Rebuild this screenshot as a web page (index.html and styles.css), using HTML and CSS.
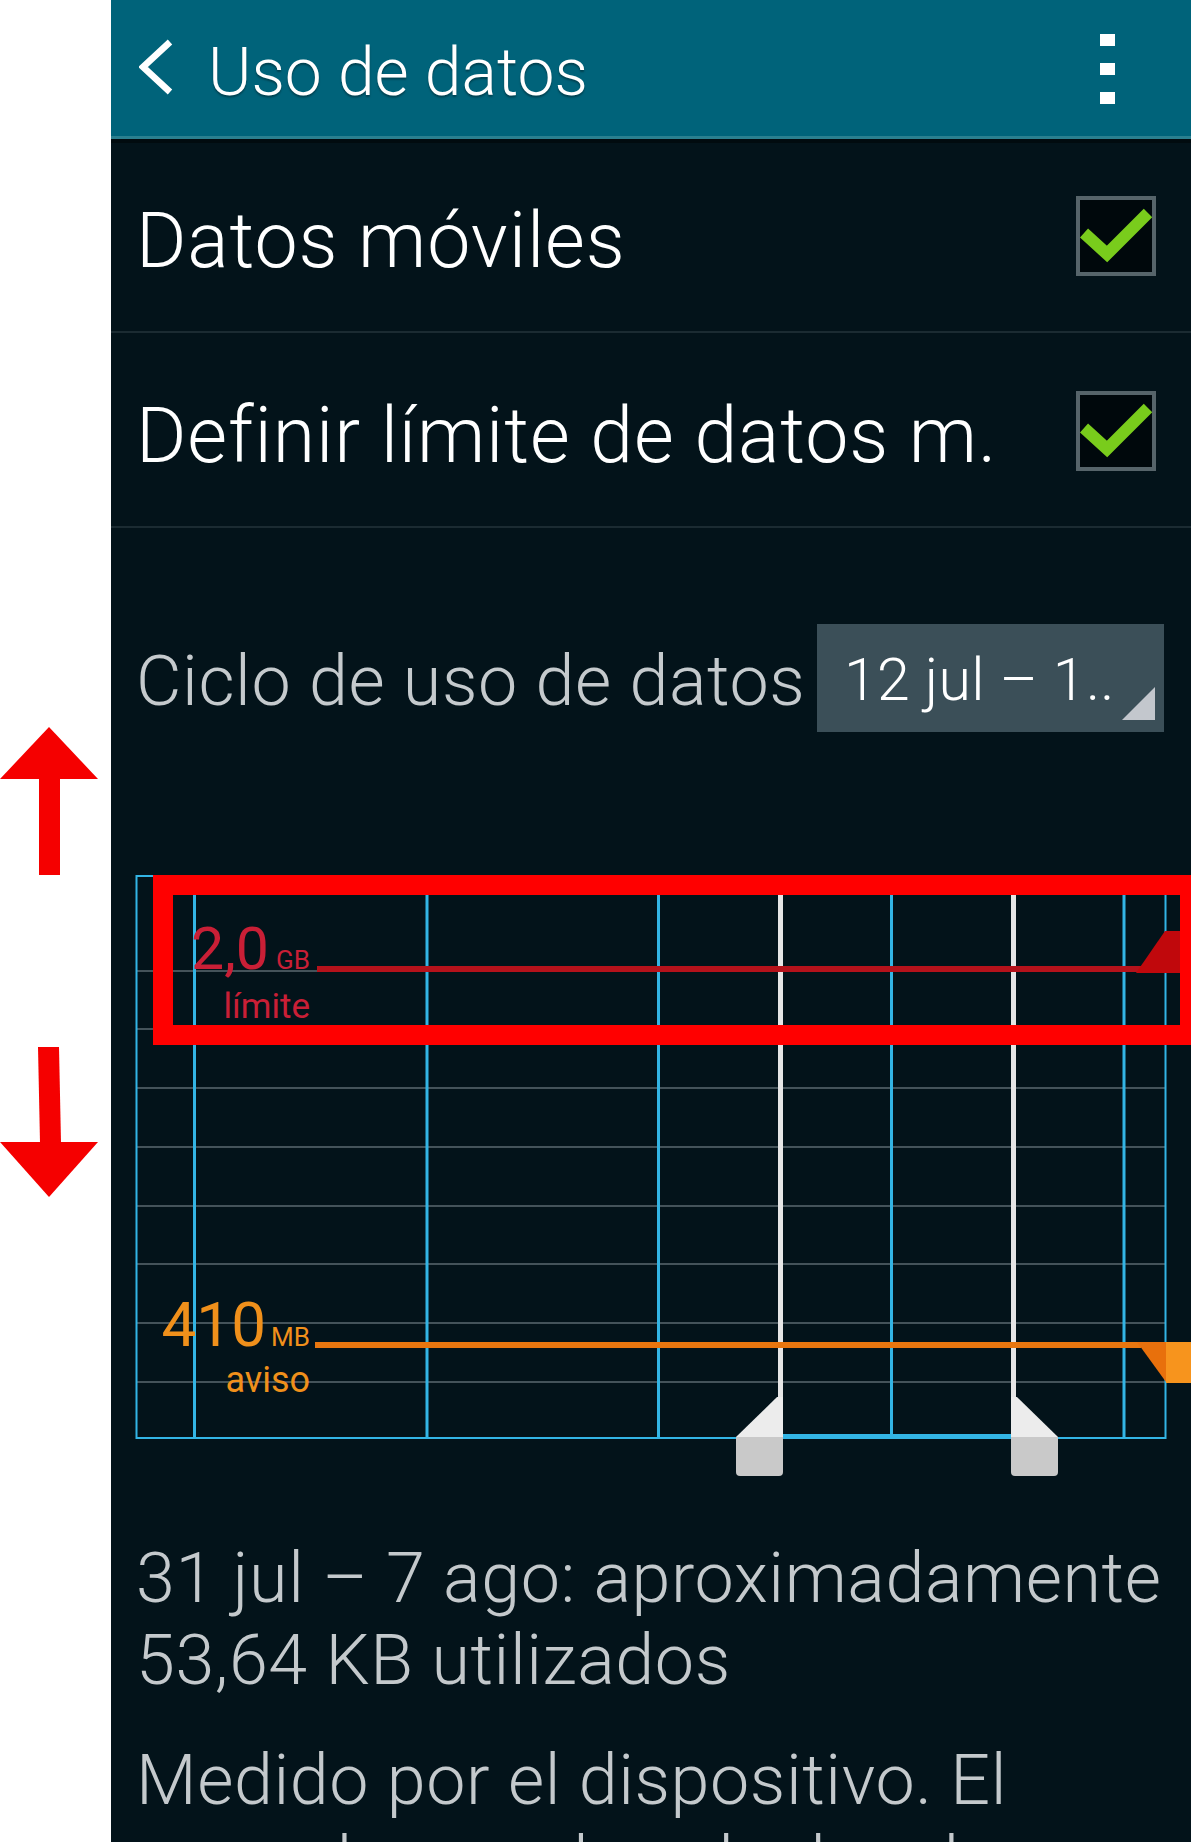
FILE: index.html
```html
<!DOCTYPE html>
<html lang="es">
<head>
<meta charset="utf-8">
<title>Uso de datos</title>
<link rel="stylesheet" href="styles.css">
</head>
<body>
<div class="page">
  <aside class="strip">
    <svg class="arrows" width="111" height="1842" viewBox="0 0 111 1842">
      <polygon points="49,727 98,779 0,779" fill="#f50000"/>
      <rect x="39" y="778" width="21" height="97" fill="#f50000"/>
      <polygon points="38,1047 59,1047 61,1143 40,1143" fill="#f50000"/>
      <polygon points="0,1142 98,1142 49,1197" fill="#f50000"/>
    </svg>
  </aside>
  <main class="screen">
    <header class="actionbar">
      <svg class="back" width="36" height="60" viewBox="0 0 36 60">
        <polyline points="31,3 4,28 31,53" fill="none" stroke="#ffffff" stroke-width="6.5"/>
      </svg>
      <h1 class="title">Uso de datos</h1>
      <div class="kebab"><span></span><span></span><span></span></div>
    </header>

    <div class="row">
      <span class="row-label">Datos móviles</span>
      <span class="checkbox">
        <svg width="72" height="72" viewBox="0 0 72 72"><polyline points="4,33 27,54 68,13" fill="none" stroke="#79cc1c" stroke-width="12"/></svg>
      </span>
    </div>
    <div class="row">
      <span class="row-label">Definir límite de datos m.</span>
      <span class="checkbox">
        <svg width="72" height="72" viewBox="0 0 72 72"><polyline points="4,33 27,54 68,13" fill="none" stroke="#79cc1c" stroke-width="12"/></svg>
      </span>
    </div>

    <div class="cycle">
      <span class="cycle-label">Ciclo de uso de datos</span>
      <div class="spinner"><span class="spinner-text">12 jul – 1..</span><span class="spinner-corner"></span></div>
    </div>

    <div class="chart">
      <svg class="chart-svg" width="1080" height="640" viewBox="0 0 1080 640">
        <g stroke="#44535a" stroke-width="2">
          <line x1="25" y1="112" x2="1054" y2="112"/>
          <line x1="25" y1="170" x2="1054" y2="170"/>
          <line x1="25" y1="229" x2="1054" y2="229"/>
          <line x1="25" y1="288" x2="1054" y2="288"/>
          <line x1="25" y1="347" x2="1054" y2="347"/>
          <line x1="25" y1="405" x2="1054" y2="405"/>
          <line x1="25" y1="464" x2="1054" y2="464"/>
          <line x1="25" y1="523" x2="1054" y2="523"/>
        </g>
        <g stroke="#33b5e5" stroke-width="3">
          <line x1="83.5" y1="17" x2="83.5" y2="579"/>
          <line x1="316" y1="17" x2="316" y2="579"/>
          <line x1="547.5" y1="17" x2="547.5" y2="579"/>
          <line x1="780.5" y1="17" x2="780.5" y2="579"/>
          <line x1="1013" y1="17" x2="1013" y2="579"/>
        </g>
        <rect x="25.5" y="17" width="1029" height="562" fill="none" stroke="#33b5e5" stroke-width="2"/>
        <rect x="672" y="575" width="229" height="5" fill="#33b5e5"/>

        <rect x="667" y="17" width="5" height="525" fill="#e6e6e6"/>
        <rect x="900" y="17" width="5" height="525" fill="#e6e6e6"/>
        <polygon points="666,538 672,538 672,578 625,578" fill="#ececec"/>
        <path d="M625 578 H672 V613 Q672 617 668 617 H629 Q625 617 625 613 Z" fill="#c9c9c9"/>
        <polygon points="900,538 906,538 947,578 900,578" fill="#ececec"/>
        <path d="M900 578 H947 V613 Q947 617 943 617 H904 Q900 617 900 613 Z" fill="#c9c9c9"/>

        <rect x="204" y="483" width="826" height="6" fill="#e8760f"/>
        <polygon points="1026,483 1055,483 1055,523" fill="#e8700c"/>
        <rect x="1055" y="483" width="25" height="41" fill="#f7941d"/>

        <rect x="206" y="107" width="824" height="6" fill="#b5121b"/>
        <polygon points="1025,114 1054,72 1080,72 1080,114" fill="#c0080c"/>

        <text class="lbl-red" x="158" y="110" text-anchor="end" font-size="59">2,0</text>
        <text class="lbl-red" x="199" y="110" text-anchor="end" font-size="26">GB</text>
        <text class="lbl-red" x="199" y="159" text-anchor="end" font-size="35">límite</text>
        <text class="lbl-orange" x="155" y="487" text-anchor="end" font-size="62">410</text>
        <text class="lbl-orange" x="199" y="487" text-anchor="end" font-size="26">MB</text>
        <text class="lbl-orange" x="199" y="533" text-anchor="end" font-size="36">aviso</text>
      </svg>
      <div class="highlight"></div>
    </div>

    <p class="summary">31 jul – 7 ago: aproximadamente 53,64 KB utilizados</p>
    <p class="summary note">Medido por el dispositivo. El operador puede calcular el uso de datos de forma diferente.</p>
  </main>
</div>
</body>
</html>
```

FILE: styles.css
```css
html, body {
  margin: 0;
  padding: 0;
  background: #ffffff;
}

body {
  width: 1191px;
  height: 1842px;
  overflow: hidden;
  font-family: Roboto, "Liberation Sans", sans-serif;
}

.page {
  display: flex;
  width: 1191px;
  height: 1842px;
}

.strip {
  width: 111px;
  flex: 0 0 111px;
  background: #ffffff;
}

.arrows {
  display: block;
}

.screen {
  flex: 1 1 auto;
  background: #03131a;
  overflow: hidden;
  position: relative;
}

/* Action bar */
.actionbar {
  height: 136px;
  background: #00637a;
  border-bottom: 3px solid #2a7f8f;
  box-shadow: 0 4px 0 #010b0f;
  display: flex;
  align-items: center;
  padding-left: 28px;
  padding-right: 76px;
  position: relative;
}

.back {
  display: block;
  margin-top: 2px;
}

.title {
  margin: 8px 0 0 33px;
  font-size: 66px;
  font-weight: 300;
  letter-spacing: 0;
  color: #ffffff;
  text-shadow: 0 2px 2px rgba(0, 0, 0, 0.35);
  flex: 1 1 auto;
  line-height: normal;
}

.kebab {
  display: flex;
  flex-direction: column;
  gap: 17px;
  margin-top: 2px;
}

.kebab span {
  display: block;
  width: 15px;
  height: 12px;
  background: #ffffff;
}

/* Settings rows */
.row {
  height: 193px;
  border-bottom: 2px solid #1b2b32;
  display: flex;
  align-items: center;
  padding-left: 25px;
  padding-right: 35px;
}

.row:first-of-type {
  height: 192px;
}

.row-label {
  flex: 1 1 auto;
  font-size: 77px;
  font-weight: 300;
  letter-spacing: 0.9px;
  color: #ffffff;
  padding-top: 12px;
  white-space: nowrap;
}

.checkbox {
  width: 72px;
  height: 72px;
  border: 4px solid #56646a;
  background: #00080c;
  display: block;
  margin-top: 2px;
}

.checkbox svg {
  display: block;
}

/* Cycle */
.cycle {
  display: flex;
  align-items: center;
  margin-top: 96px;
  padding-left: 25px;
  padding-right: 27px;
}

.cycle-label {
  flex: 1 1 auto;
  font-size: 70px;
  font-weight: 300;
  color: #c5cacd;
  padding-top: 6px;
  white-space: nowrap;
  letter-spacing: 0.6px;
}

.spinner {
  width: 347px;
  height: 108px;
  flex: 0 0 347px;
  background: #3b4f58;
  position: relative;
  display: flex;
  align-items: center;
  padding-left: 27px;
  box-sizing: border-box;
}

.spinner-text {
  font-size: 59px;
  font-weight: 300;
  letter-spacing: 0.3px;
  color: #ffffff;
  white-space: nowrap;
  padding-top: 2px;
}

.spinner-corner {
  position: absolute;
  right: 9px;
  bottom: 12px;
  width: 0;
  height: 0;
  border-left: 33px solid transparent;
  border-bottom: 33px solid #c3c7cd;
}

/* Chart */
.chart {
  position: relative;
  margin-top: 127px;
  height: 640px;
}

.chart-svg {
  display: block;
}

.lbl-red {
  fill: #c91f36;
  font-family: Roboto, "Liberation Sans", sans-serif;
  font-weight: 400;
}

.lbl-orange {
  fill: #f0901b;
  font-family: Roboto, "Liberation Sans", sans-serif;
  font-weight: 400;
}

.highlight {
  position: absolute;
  left: 42px;
  top: 16px;
  width: 1047px;
  height: 170px;
  border: 20px solid #ff0000;
  box-sizing: border-box;
}

/* Text */
.summary {
  margin: 38px 0 0 0;
  padding-left: 25px;
  padding-right: 18px;
  font-size: 70px;
  line-height: 82px;
  font-weight: 300;
  letter-spacing: 0.6px;
  color: #c4c9cc;
}

.note {
  margin-top: 38px;
}
```
